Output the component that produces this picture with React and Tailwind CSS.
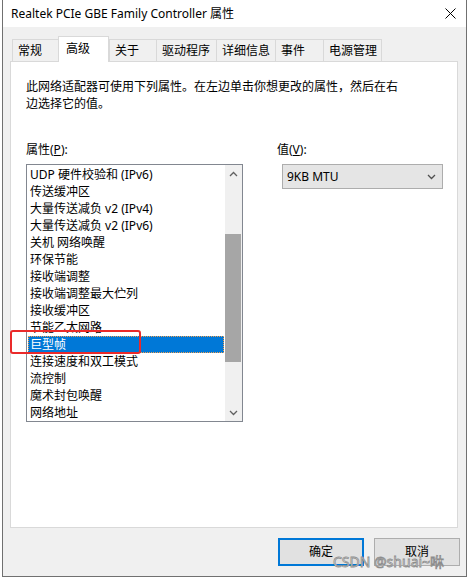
import React from 'react';

const font = "font-['Noto_Sans','Noto_Sans_CJK_SC',sans-serif]";

const tabs = [
  { label: '常规', w: 'w-[46px]' },
  { label: '高级', w: 'w-[51px]', active: true },
  { label: '关于', w: 'w-[47px]' },
  { label: '驱动程序', w: 'w-[60px]' },
  { label: '详细信息', w: 'w-[59px]' },
  { label: '事件', w: 'w-[48px]' },
  { label: '电源管理', w: 'w-[59px]', last: true },
];

const items = [
  'UDP 硬件校验和 (IPv6)',
  '传送缓冲区',
  '大量传送减负 v2 (IPv4)',
  '大量传送减负 v2 (IPv6)',
  '关机 网络唤醒',
  '环保节能',
  '接收端调整',
  '接收端调整最大伫列',
  '接收缓冲区',
  '节能乙太网路',
  '巨型帧',
  '连接速度和双工模式',
  '流控制',
  '魔术封包唤醒',
  '网络地址',
];

function Chevron({ up, className }) {
  return (
    <svg width="9" height="6" viewBox="0 0 9 6" className={className}>
      <path
        d={up ? 'M1 5 L4.5 1.5 L8 5' : 'M1 1 L4.5 4.5 L8 1'}
        fill="none"
        stroke="currentColor"
        strokeWidth="1.3"
      />
    </svg>
  );
}

function ListBox() {
  return (
    <div className="w-[217px] h-[258px] border border-[#828790] bg-white flex">
      <div className="flex-1 pt-[1px] pl-[1px] pr-[1px] overflow-hidden">
        {items.map((item) => (
          <div
            key={item}
            className={`h-[17px] leading-[17px] pl-[2px] whitespace-nowrap ${
              item === '巨型帧'
                ? 'bg-[#0078d7] text-white outline outline-1 outline-dotted outline-[#f0a050] -outline-offset-1'
                : 'text-black'
            }`}
          >
            {item}
          </div>
        ))}
      </div>
      <div className="w-[17px] bg-[#f0f0f0] flex flex-col">
        <div className="h-[17px] flex items-center justify-center text-[#606060]">
          <Chevron up />
        </div>
        <div className="h-[52px]" />
        <div className="h-[128px] bg-[#a6a6a6] mr-[1px]" />
        <div className="flex-1" />
        <div className="h-[17px] flex items-center justify-center text-[#606060]">
          <Chevron />
        </div>
      </div>
    </div>
  );
}

export default function App() {
  return (
    <div className={`w-[470px] h-[580px] bg-white relative text-[12px] text-black ${font}`}>
      <div className="ml-[2px] w-[465px] h-[577px] border-x border-b border-[#707070] bg-[#f0f0f0] flex flex-col">
        {/* Title bar */}
        <div className="h-[27px] bg-white flex items-center justify-between pl-[8px] pr-[10px]">
          <span className="text-[12px] pt-[1px]">Realtek PCIe GBE Family Controller 属性</span>
          <svg width="11" height="11" viewBox="0 0 11 11">
            <path d="M0.5 0.5 L10.5 10.5 M10.5 0.5 L0.5 10.5" stroke="#000" strokeWidth="1" />
          </svg>
        </div>

        {/* Tabs */}
        <div className="ml-[9px] mt-[9px] h-[25px] flex items-end">
          {tabs.map((t) =>
            t.active ? (
              <div
                key={t.label}
                className={`${t.w} h-[26px] -mb-px relative z-10 bg-white border-x border-t border-[#d9d9d9] pl-[7px] pt-[3px]`}
              >
                {t.label}
              </div>
            ) : (
              <div
                key={t.label}
                className={`${t.w} h-[22px] border-t border-l ${t.last ? 'border-r' : ''} border-[#d9d9d9] pl-[5px] pt-[2px]`}
              >
                {t.label}
              </div>
            )
          )}
        </div>

        {/* Panel */}
        <div className="ml-[7px] w-[448px] h-[467px] bg-white border border-[#d9d9d9] pl-[15px] pt-[16px]">
          <p className="leading-[17px]">
            此网络适配器可使用下列属性。在左边单击你想更改的属性，然后在右
            <br />
            边选择它的值。
          </p>
          <div className="mt-[29px] flex">
            <div>
              <div className="leading-[17px] mb-[6px]">
                属性(<span className="underline">P</span>):
              </div>
              <ListBox />
            </div>
            <div className="ml-[34px]">
              <div className="leading-[17px] mb-[6px]">
                值(<span className="underline">V</span>):
              </div>
              <div className="ml-[5px] w-[161px] h-[25px] bg-[#e5e5e5] border border-[#adadad] flex items-center justify-between pl-[4px] pr-[6px]">
                <span>9KB MTU</span>
                <Chevron className="text-[#505050]" />
              </div>
            </div>
          </div>
        </div>

        {/* Buttons */}
        <div className="mt-[10px] ml-[275px] flex gap-[10px]">
          <button className="w-[86px] h-[28px] bg-[#e1e1e1] border-2 border-[#0078d7]">确定</button>
          <button className="w-[86px] h-[28px] bg-[#e1e1e1] border border-[#adadad]">取消</button>
        </div>
      </div>

      {/* Red highlight */}
      <div className="absolute left-[10px] top-[330px] w-[131px] h-[24px] border-2 border-[#ea2a2a] rounded-[3px]" />

      {/* Watermark */}
      <div className="absolute left-[333px] top-[553px] text-[14px] leading-[18px] text-white/85 [-webkit-text-stroke:0.8px_#8c8c8c] whitespace-nowrap">
        CSDN @shuai~咻
      </div>
    </div>
  );
}
